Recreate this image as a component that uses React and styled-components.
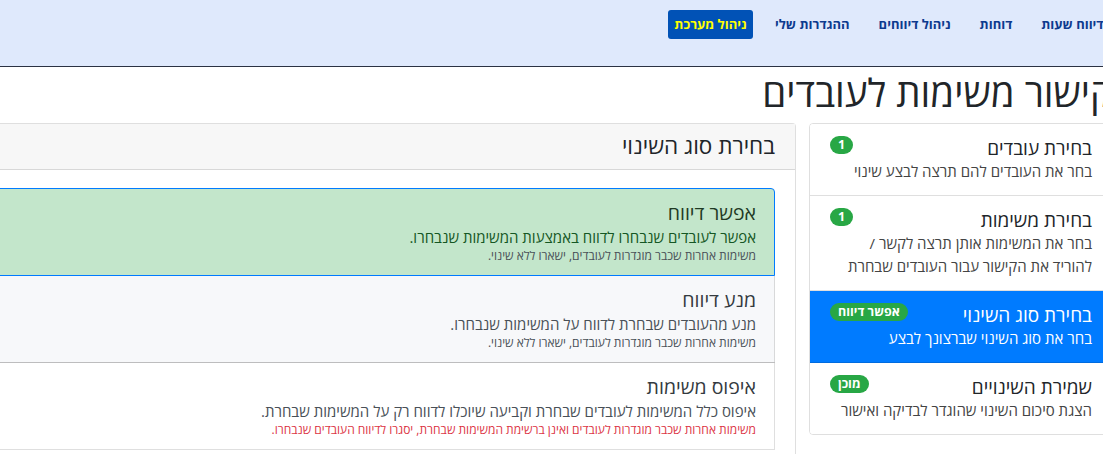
import React from "react";
import styled, { createGlobalStyle, css } from "styled-components";

const GlobalStyle = createGlobalStyle`
  html, body {
    margin: 0;
    padding: 0;
    background: #fff;
  }
  body {
    font-family: "Open Sans", "Liberation Sans", "DejaVu Sans", sans-serif;
    color: #212529;
    overflow: hidden;
  }
  * { box-sizing: border-box; }
`;

const Page = styled.div`
  width: 100%;
  overflow: hidden;
  direction: rtl;
`;

const NavBar = styled.nav`
  height: 67px;
  background: #dfe9fc;
  border-bottom: 1px solid #2b3243;
  display: flex;
  align-items: flex-start;
  padding-top: 10px;
`;

const NavList = styled.ul`
  list-style: none;
  margin: 0 -15px 0 0;
  padding: 0;
  display: flex;
  align-items: center;
`;

const NavLink = styled.a`
  display: block;
  height: 29px;
  line-height: 29px;
  padding: 0 14.5px;
  font-size: 13px;
  font-weight: 700;
  color: #0d3a8e;
  text-decoration: none;
  white-space: nowrap;
  ${({ $active }) =>
    $active &&
    css`
      margin-right: 8px;
      padding: 0 6px;
      background: #0152b6;
      color: #ffff00;
      border-radius: 3px;
    `}
`;

const Content = styled.div`
  margin-right: -10px;
`;

const Title = styled.h1`
  margin: 0;
  height: 56px;
  line-height: 50px;
  font-size: 38.5px;
  font-weight: 400;
  color: #212529;
  white-space: nowrap;
`;

const Row = styled.div`
  display: flex;
  align-items: flex-start;
  gap: 13px;
`;

const StepsCol = styled.div`
  flex: 0 0 304px;
  border: 1px solid rgba(0, 0, 0, 0.125);
  border-radius: 4px;
  overflow: hidden;
`;

const Step = styled.div`
  padding: 12px 20px;
  border-bottom: 1px solid rgba(0, 0, 0, 0.125);
  background: ${({ $active }) => ($active ? "#007bff" : "#fff")};
  color: ${({ $active }) => ($active ? "#fff" : "#212529")};
  &:last-child { border-bottom: 0; }
`;

const StepHead = styled.div`
  display: flex;
  justify-content: space-between;
  align-items: flex-start;
`;

const StepTitle = styled.div`
  font-size: 19px;
  line-height: 24px;
`;

const StepText = styled.div`
  font-size: 15px;
  line-height: 23px;
  color: ${({ $active }) => ($active ? "#fff" : "#444")};
`;

const Badge = styled.span`
  display: inline-block;
  padding: 2px 8px;
  font-size: 12.5px;
  line-height: 14px;
  font-weight: 700;
  color: #fff;
  background: #28a745;
  border-radius: 10px;
  white-space: nowrap;
`;

const MainCard = styled.div`
  flex: 0 0 1000px;
  border: 1px solid rgba(0, 0, 0, 0.125);
  border-radius: 4px;
  background: #fff;
`;

const CardHeader = styled.div`
  height: 46px;
  padding: 0 20px;
  background: #f7f7f7;
  border-bottom: 1px solid rgba(0, 0, 0, 0.125);
  font-size: 22.5px;
  line-height: 44px;
  color: #212529;
`;

const CardBody = styled.div`
  padding: 18px 20px 20px;
`;

const Option = styled.div`
  position: relative;
  padding: 12px 18px;
  border: 1px solid rgba(0, 0, 0, 0.125);
  margin-bottom: -1px;
  color: #495057;
  ${({ $variant }) =>
    $variant === "success" &&
    css`
      z-index: 1;
      background: #c3e6cb;
      border-color: #007bff;
      color: #155724;
    `}
  ${({ $variant }) =>
    $variant === "hover" &&
    css`
      background: #f7f8fa;
    `}
  &:first-child { border-radius: 4px 4px 0 0; }
`;

const OptionTitle = styled.div`
  font-size: 19.5px;
  line-height: 24px;
  color: ${({ $variant }) => ($variant === "success" ? "#1f3a24" : "#343a40")};
`;

const OptionText = styled.div`
  font-size: 15px;
  line-height: 24px;
`;

const OptionNote = styled.div`
  font-size: 12px;
  line-height: 14px;
  color: ${({ $danger }) => ($danger ? "#dc3545" : "#495057")};
`;

const navItems = ["דיווח שעות", "דוחות", "ניהול דיווחים", "ההגדרות שלי"];

const steps = [
  { title: "בחירת עובדים", text: ["בחר את העובדים להם תרצה לבצע שינוי"], badge: "1" },
  {
    title: "בחירת משימות",
    text: ["בחר את המשימות אותן תרצה לקשר /", "להוריד את הקישור עבור העובדים שבחרת"],
    badge: "1",
  },
  { title: "בחירת סוג השינוי", text: ["בחר את סוג השינוי שברצונך לבצע"], badge: "אפשר דיווח", active: true },
  { title: "שמירת השינויים", text: ["הצגת סיכום השינוי שהוגדר לבדיקה ואישור"], badge: "מוכן" },
];

const options = [
  {
    title: "אפשר דיווח",
    text: "אפשר לעובדים שנבחרו לדווח באמצעות המשימות שנבחרו.",
    note: "משימות אחרות שכבר מוגדרות לעובדים, ישארו ללא שינוי.",
    variant: "success",
  },
  {
    title: "מנע דיווח",
    text: "מנע מהעובדים שבחרת לדווח על המשימות שנבחרו.",
    note: "משימות אחרות שכבר מוגדרות לעובדים, ישארו ללא שינוי.",
    variant: "hover",
  },
  {
    title: "איפוס משימות",
    text: "איפוס כלל המשימות לעובדים שבחרת וקביעה שיוכלו לדווח רק על המשימות שבחרת.",
    note: "משימות אחרות שכבר מוגדרות לעובדים ואינן ברשימת המשימות שבחרת, יסגרו לדיווח העובדים שנבחרו.",
    danger: true,
  },
];

export default function App() {
  return (
    <Page>
      <GlobalStyle />
      <NavBar>
        <NavList>
          {navItems.map((item) => (
            <li key={item}>
              <NavLink href="#">{item}</NavLink>
            </li>
          ))}
          <li>
            <NavLink href="#" $active>
              ניהול מערכת
            </NavLink>
          </li>
        </NavList>
      </NavBar>

      <Content>
        <Title>קישור משימות לעובדים</Title>
        <Row>
          <StepsCol>
            {steps.map((s) => (
              <Step key={s.title} $active={s.active}>
                <StepHead>
                  <StepTitle>{s.title}</StepTitle>
                  <Badge>{s.badge}</Badge>
                </StepHead>
                {s.text.map((t) => (
                  <StepText key={t} $active={s.active}>
                    {t}
                  </StepText>
                ))}
              </Step>
            ))}
          </StepsCol>

          <MainCard>
            <CardHeader>בחירת סוג השינוי</CardHeader>
            <CardBody>
              {options.map((o) => (
                <Option key={o.title} $variant={o.variant}>
                  <OptionTitle $variant={o.variant}>{o.title}</OptionTitle>
                  <OptionText>{o.text}</OptionText>
                  <OptionNote $danger={o.danger}>{o.note}</OptionNote>
                </Option>
              ))}
            </CardBody>
          </MainCard>
        </Row>
      </Content>
    </Page>
  );
}
